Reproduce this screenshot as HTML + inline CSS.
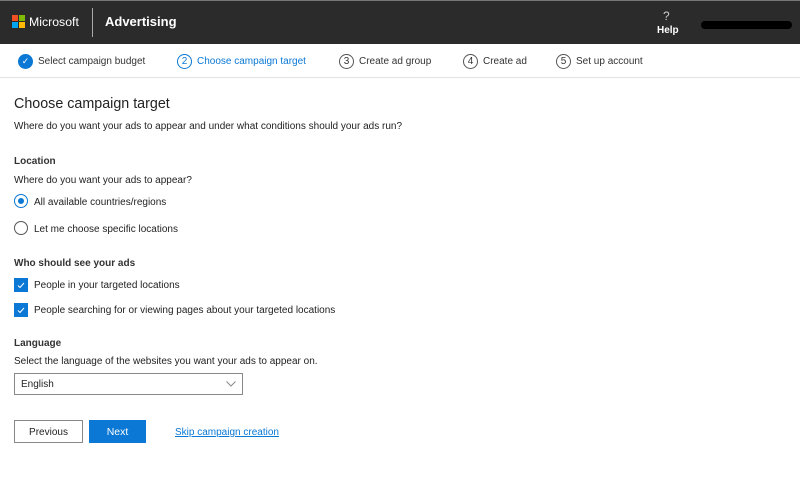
<!DOCTYPE html>
<html><head><meta charset="utf-8"><style>
*{margin:0;padding:0;box-sizing:border-box}
body{width:800px;height:487px;background:#fff;font-family:"Liberation Sans",sans-serif;color:#222;position:relative;overflow:hidden}
.hdr{position:absolute;left:0;top:0;width:800px;height:44px;background:#2b2b2b;border-top:1px solid #777}
.ab{position:absolute;white-space:nowrap}
.steps{position:absolute;top:44px;left:0;width:800px;height:34px;border-bottom:1px solid #e3e3e3;font-size:10px;color:#333}
.circ{display:inline-block;width:15px;height:15px;border:1px solid #555;border-radius:50%;font-size:10px;text-align:center;line-height:13px;vertical-align:middle;margin-right:5px}
.t{font-size:10px;color:#222}
.radio{position:absolute;width:14px;height:14px;border-radius:50%;border:1px solid #555;background:#fff}
.cb{position:absolute;width:14px;height:14px;background:#0a78d4}
</style></head><body>
<div class="hdr">
 <div class="ab" style="left:12px;top:14px;width:14px;height:14px">
  <div style="position:absolute;left:0;top:0;width:6px;height:6px;background:#f25022"></div>
  <div style="position:absolute;left:7px;top:0;width:6px;height:6px;background:#7fba00"></div>
  <div style="position:absolute;left:0;top:7px;width:6px;height:6px;background:#00a4ef"></div>
  <div style="position:absolute;left:7px;top:7px;width:6px;height:6px;background:#ffb900"></div>
 </div>
 <div class="ab" style="left:29px;top:14px;color:#fff;font-size:12.3px">Microsoft</div>
 <div class="ab" style="left:92px;top:7px;width:1px;height:29px;background:#aaa"></div>
 <div class="ab" style="left:105px;top:13px;color:#fff;font-size:13px;font-weight:bold">Advertising</div>
 <div class="ab" style="left:663px;top:8px;color:#ccc;font-size:12px">?</div>
 <div class="ab" style="left:657px;top:24px;color:#fff;font-size:10px;font-weight:bold">Help</div>
 <div class="ab" style="left:701px;top:20px;width:91px;height:8px;background:#000;border-radius:4px"></div>
</div>
<div class="steps">
 <div class="ab" style="left:18px;top:10px"><span class="circ" style="background:#0a78d4;border-color:#0a78d4;color:#fff;font-size:9px">✓</span>Select campaign budget</div>
 <div class="ab" style="left:177px;top:10px;color:#0a78d4"><span class="circ" style="border-color:#0a78d4">2</span>Choose campaign target</div>
 <div class="ab" style="left:339px;top:10px"><span class="circ">3</span>Create ad group</div>
 <div class="ab" style="left:463px;top:10px"><span class="circ">4</span>Create ad</div>
 <div class="ab" style="left:556px;top:10px"><span class="circ">5</span>Set up account</div>
</div>
<div class="ab" style="left:14px;top:96px;font-size:14.3px;color:#222">Choose campaign target</div>
<div class="ab t" style="left:14px;top:121px">Where do you want your ads to appear and under what conditions should your ads run?</div>
<div class="ab t" style="left:14px;top:156px;font-weight:bold;color:#333">Location</div>
<div class="ab t" style="left:14px;top:175px">Where do you want your ads to appear?</div>
<div class="radio" style="left:14px;top:194px;border-color:#0a78d4"><div style="position:absolute;left:3px;top:3px;width:6px;height:6px;border-radius:50%;background:#0a78d4"></div></div>
<div class="ab t" style="left:34px;top:197px">All available countries/regions</div>
<div class="radio" style="left:14px;top:221px"></div>
<div class="ab t" style="left:34px;top:224px">Let me choose specific locations</div>
<div class="ab t" style="left:14px;top:258px;font-weight:bold;color:#333">Who should see your ads</div>
<div class="cb" style="left:14px;top:278px"><svg width="14" height="14"><path d="M4 7.5l2 2 4-4.5" stroke="#fff" fill="none" stroke-width="1"/></svg></div>
<div class="ab t" style="left:34px;top:280px">People in your targeted locations</div>
<div class="cb" style="left:14px;top:303px"><svg width="14" height="14"><path d="M4 7.5l2 2 4-4.5" stroke="#fff" fill="none" stroke-width="1"/></svg></div>
<div class="ab t" style="left:34px;top:305px">People searching for or viewing pages about your targeted locations</div>
<div class="ab t" style="left:14px;top:338px;font-weight:bold;color:#333">Language</div>
<div class="ab t" style="left:14px;top:356px">Select the language of the websites you want your ads to appear on.</div>
<div class="ab" style="left:14px;top:373px;width:229px;height:22px;border:1px solid #888;font-size:10px;padding:5px 6px">English
 <svg style="position:absolute;right:6px;top:7px" width="10" height="6"><path d="M0.5 0.5l4.5 4.5 4.5-4.5" stroke="#888" fill="none"/></svg></div>
<div class="ab" style="left:14px;top:420px;width:69px;height:23px;border:1px solid #888;font-size:10px;text-align:center;line-height:23px;color:#222">Previous</div>
<div class="ab" style="left:89px;top:420px;width:57px;height:23px;background:#0a78d4;font-size:10.5px;text-align:center;line-height:24px;color:#fff">Next</div>
<div class="ab" style="left:175px;top:427px;font-size:10px;color:#0a78d4;text-decoration:underline">Skip campaign creation</div>
</body></html>
